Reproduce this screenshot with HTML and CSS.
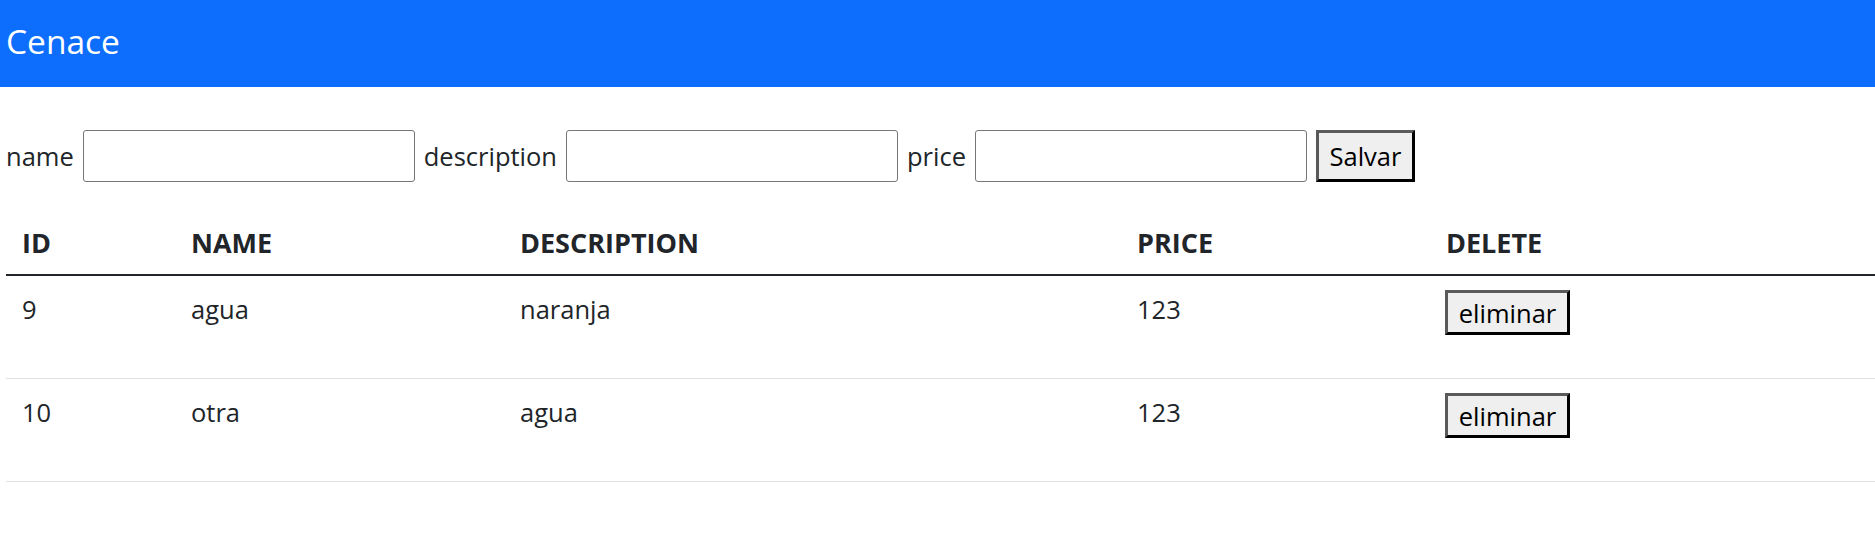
FILE: index.html
```html
<!DOCTYPE html>
<html lang="es">
<head>
<meta charset="utf-8">
<title>Cenace</title>
<link rel="stylesheet" href="styles.css">
</head>
<body>
<nav class="navbar">
  <span class="brand">Cenace</span>
</nav>
<main class="content">
  <form class="product-form">
    <label class="field-label" for="f-name">name</label>
    <input class="field-input" id="f-name" type="text">
    <label class="field-label" for="f-desc">description</label>
    <input class="field-input" id="f-desc" type="text">
    <label class="field-label" for="f-price">price</label>
    <input class="field-input" id="f-price" type="text">
    <button class="btn-native btn-save" type="button">Salvar</button>
  </form>
  <table class="products">
    <colgroup>
      <col class="c-id">
      <col class="c-name">
      <col class="c-desc">
      <col class="c-price">
      <col class="c-del">
    </colgroup>
    <thead>
      <tr>
        <th>ID</th>
        <th>NAME</th>
        <th>DESCRIPTION</th>
        <th>PRICE</th>
        <th>DELETE</th>
      </tr>
    </thead>
    <tbody>
      <tr>
        <td>9</td>
        <td>agua</td>
        <td>naranja</td>
        <td>123</td>
        <td class="cell-btn"><button class="btn-native btn-del" type="button">eliminar</button></td>
      </tr>
      <tr>
        <td>10</td>
        <td>otra</td>
        <td>agua</td>
        <td>123</td>
        <td class="cell-btn"><button class="btn-native btn-del" type="button">eliminar</button></td>
      </tr>
    </tbody>
  </table>
</main>
</body>
</html>
```

FILE: styles.css
```css
* {
  box-sizing: border-box;
}

html, body {
  margin: 0;
  padding: 0;
  background: #ffffff;
}

body {
  font-family: "Open Sans", "Noto Sans", sans-serif;
  font-size: 25.5px;
  line-height: 36px;
  color: #212529;
}

.navbar {
  height: 87px;
  background: #0d6efd;
  display: flex;
  align-items: center;
  padding: 0 6px;
}

.brand {
  color: #ffffff;
  font-size: 33.5px;
  line-height: 44px;
  margin-top: -5px;
}

.content {
  padding: 43px 0 0 6px;
}

.product-form {
  display: flex;
  align-items: center;
  gap: 9px;
  height: 52px;
  margin: 0;
}

.field-label {
  white-space: nowrap;
}

.field-input {
  width: 332px;
  height: 52px;
  border: 1px solid #767676;
  border-radius: 3px;
  background: #ffffff;
  font: inherit;
  padding: 0 6px;
  margin: 0;
}

.btn-native {
  font: inherit;
  color: #000000;
  background: #efefef;
  border-style: solid;
  border-width: 3px;
  border-color: #5a5a5a #000000 #000000 #5a5a5a;
  border-radius: 0;
  margin: 0;
  padding: 0;
  cursor: pointer;
}

.btn-save {
  width: 99px;
  height: 52px;
}

.products {
  width: calc(100% + 6px);
  margin-top: 29px;
  border-collapse: collapse;
  table-layout: fixed;
}

.c-id { width: 169px; }
.c-name { width: 329px; }
.c-desc { width: 617px; }
.c-price { width: 309px; }

.products th {
  text-align: left;
  font-weight: 700;
  font-size: 27px;
  padding: 14px 16px 13px;
  border-bottom: 2px solid #212529;
}

.products td {
  vertical-align: top;
  padding: 15px 16px 51px;
  border-bottom: 1px solid #dee2e6;
}

.products td.cell-btn {
  padding-top: 14px;
  padding-bottom: 40px;
}

.btn-del {
  display: block;
  width: 125px;
  height: 45px;
  margin-left: -1px;
}
```
